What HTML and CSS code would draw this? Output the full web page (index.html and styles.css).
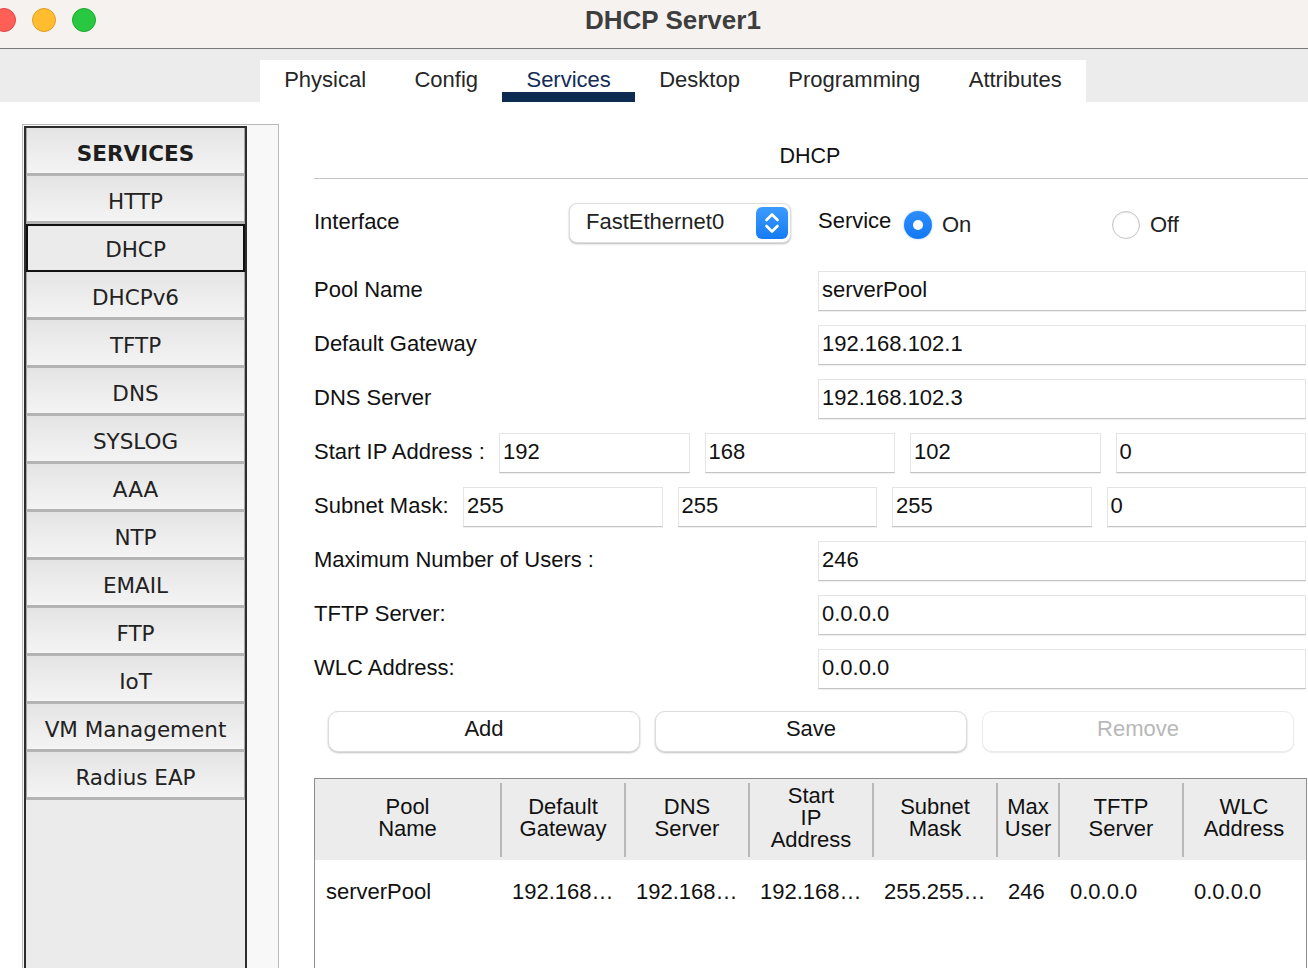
FILE: index.html
```html
<!DOCTYPE html>
<html lang="en">
<head>
<meta charset="utf-8">
<title>DHCP Server1</title>
<link rel="stylesheet" href="styles.css">
</head>
<body>
<div class="window">
  <header class="titlebar">
    <div class="lights">
      <span class="light red"></span>
      <span class="light yellow"></span>
      <span class="light green"></span>
    </div>
    <div class="title">DHCP Server1</div>
  </header>

  <nav class="tabbar">
    <div class="tabs">
      <span class="tab">Physical</span>
      <span class="tab">Config</span>
      <span class="tab active">Services</span>
      <span class="tab">Desktop</span>
      <span class="tab">Programming</span>
      <span class="tab">Attributes</span>
    </div>
  </nav>

  <main class="main">
    <aside class="sidebar">
      <div class="svc-list">
        <div class="svc head">SERVICES</div>
        <div class="svc">HTTP</div>
        <div class="svc selected">DHCP</div>
        <div class="svc">DHCPv6</div>
        <div class="svc">TFTP</div>
        <div class="svc">DNS</div>
        <div class="svc">SYSLOG</div>
        <div class="svc">AAA</div>
        <div class="svc">NTP</div>
        <div class="svc">EMAIL</div>
        <div class="svc">FTP</div>
        <div class="svc">IoT</div>
        <div class="svc">VM Management</div>
        <div class="svc">Radius EAP</div>
      </div>
    </aside>

    <section class="panel">
      <div class="panel-title">DHCP</div>

      <div class="form">
        <div class="row iface-row">
          <span class="lbl lbl-iface">Interface</span>
          <div class="select">
            <span class="select-text">FastEthernet0</span>
            <span class="select-btn">
              <svg width="32" height="32" viewBox="0 0 32 32">
                <path d="M10.5 13 L16 7.5 L21.5 13" fill="none" stroke="#fff" stroke-width="2.6" stroke-linecap="round" stroke-linejoin="round"/>
                <path d="M10.5 19 L16 24.5 L21.5 19" fill="none" stroke="#fff" stroke-width="2.6" stroke-linecap="round" stroke-linejoin="round"/>
              </svg>
            </span>
          </div>
          <span class="svc-lbl">Service</span>
          <span class="radio-group"><span class="radio on"></span><span class="radio-text">On</span></span>
          <span class="radio-group"><span class="radio"></span><span class="radio-text">Off</span></span>
        </div>

        <div class="row">
          <span class="lbl lbl-wide">Pool Name</span>
          <input class="field" value="serverPool">
        </div>
        <div class="row">
          <span class="lbl lbl-wide">Default Gateway</span>
          <input class="field" value="192.168.102.1">
        </div>
        <div class="row">
          <span class="lbl lbl-wide">DNS Server</span>
          <input class="field" value="192.168.102.3">
        </div>
        <div class="row quad-row">
          <span class="lbl lbl-start">Start IP Address :</span>
          <input class="field" value="192">
          <input class="field" value="168">
          <input class="field" value="102">
          <input class="field" value="0">
        </div>
        <div class="row quad-row">
          <span class="lbl lbl-subnet">Subnet Mask:</span>
          <input class="field" value="255">
          <input class="field" value="255">
          <input class="field" value="255">
          <input class="field" value="0">
        </div>
        <div class="row">
          <span class="lbl lbl-wide">Maximum Number of Users :</span>
          <input class="field" value="246">
        </div>
        <div class="row">
          <span class="lbl lbl-wide">TFTP Server:</span>
          <input class="field" value="0.0.0.0">
        </div>
        <div class="row">
          <span class="lbl lbl-wide">WLC Address:</span>
          <input class="field" value="0.0.0.0">
        </div>
      </div>

      <div class="buttons">
        <button class="btn">Add</button>
        <button class="btn">Save</button>
        <button class="btn disabled">Remove</button>
      </div>

      <div class="table-wrap">
        <table class="pools">
          <colgroup>
            <col class="c-pool">
            <col class="c-std">
            <col class="c-std">
            <col class="c-std">
            <col class="c-std">
            <col class="c-max">
            <col class="c-std">
            <col class="c-last">
          </colgroup>
          <thead>
            <tr>
              <th>Pool<br>Name</th>
              <th>Default<br>Gateway</th>
              <th>DNS<br>Server</th>
              <th>Start<br>IP<br>Address</th>
              <th>Subnet<br>Mask</th>
              <th>Max<br>User</th>
              <th>TFTP<br>Server</th>
              <th class="last">WLC<br>Address</th>
            </tr>
          </thead>
          <tbody>
            <tr>
              <td class="first">serverPool</td>
              <td>192.168…</td>
              <td>192.168…</td>
              <td>192.168…</td>
              <td>255.255…</td>
              <td>246</td>
              <td>0.0.0.0</td>
              <td>0.0.0.0</td>
            </tr>
          </tbody>
        </table>
      </div>
    </section>
  </main>
</div>
</body>
</html>
```

FILE: styles.css
```css
html, body {
  margin: 0;
  padding: 0;
}
body {
  width: 1308px;
  height: 968px;
  overflow: hidden;
  background: #ffffff;
  font-family: "Liberation Sans", Arial, Helvetica, sans-serif;
  color: #111;
}
.window {
  width: 1308px;
  height: 968px;
  overflow: hidden;
}

/* title bar */
.titlebar {
  height: 49px;
  box-sizing: border-box;
  padding-bottom: 8px;
  background: #f6f2ef;
  border-bottom: 1px solid #7a7a7a;
  display: flex;
  align-items: center;
}
.lights {
  display: flex;
  gap: 16px;
  margin-left: -8px;
}
.light {
  width: 24px;
  height: 24px;
  border-radius: 50%;
  box-sizing: border-box;
}
.red { background: #ff5f57; border: 1px solid #e2463f; }
.yellow { background: #febc2e; border: 1px solid #dea123; }
.green { background: #28c840; border: 1px solid #1daa2c; }
.title {
  margin-left: 489px;
  font-size: 26px;
  font-weight: bold;
  color: #3e3e3e;
  line-height: 30px;
}

/* tabs */
.tabbar {
  height: 53px;
  background: #ececec;
  display: flex;
  align-items: flex-end;
  padding-left: 260px;
}
.tabs {
  display: flex;
  background: #ffffff;
  height: 42px;
}
.tab {
  padding: 0 24.2px;
  font-size: 22px;
  line-height: 40px;
  color: #262626;
}
.tab.active {
  color: #142d57;
  box-shadow: inset 0 -10px 0 #0d2a50;
}

/* main */
.main {
  display: flex;
  align-items: flex-start;
  padding-top: 22px;
}

/* sidebar */
.sidebar {
  margin-left: 22px;
  width: 257px;
  height: 846px;
  box-sizing: border-box;
  border: 1px solid #b9b9b9;
  border-bottom: none;
  background: #f8f8f8;
  padding: 1px 0 0 1px;
  flex: none;
}
.svc-list {
  width: 223px;
  height: 100%;
  box-sizing: border-box;
  border: 2px solid #2d2d2d;
  border-bottom: none;
  background: #ebebeb;
}
.svc {
  height: 48px;
  box-sizing: border-box;
  border-left: 1px solid #a7a7a7;
  border-right: 1px solid #a7a7a7;
  border-bottom: 3px solid #b3b3b3;
  background: linear-gradient(#e4e4e4, #f4f4f4);
  display: flex;
  align-items: center;
  justify-content: center;
  font-family: "DejaVu Sans", Verdana, sans-serif;
  font-size: 21.5px;
  color: #222;
  padding-top: 5px;
}
.svc.head {
  font-weight: bold;
  color: #1e1e1e;
}
.svc.selected {
  border: 2px solid #111;
  background: #ebebeb;
  padding-top: 2px;
}

/* panel */
.panel {
  margin-left: 35px;
  width: 994px;
  flex: none;
}
.panel-title {
  font-size: 21.5px;
  line-height: 24px;
  text-align: center;
  padding: 20px 2px 10px 0;
  border-bottom: 1px solid #c4c4c4;
  color: #111;
}

.form {
  width: 992px;
  margin-top: 24px;
  display: flex;
  flex-direction: column;
  gap: 14px;
}
.row {
  display: flex;
  align-items: center;
  height: 40px;
}
.iface-row {
  margin-bottom: 14px;
}
.lbl {
  font-size: 22px;
  color: #111;
  flex: none;
  white-space: nowrap;
  padding-bottom: 2px;
}
.lbl-wide { width: 504px; }
.lbl-iface { width: 255px; }
.lbl-start { width: 185px; }
.lbl-subnet { width: 149px; }
.quad-row { gap: 15px; }
.quad-row .lbl { margin-right: -15px; }

.field {
  flex: 1;
  min-width: 0;
  height: 40px;
  box-sizing: border-box;
  border: 1px solid #e4e4e4;
  border-bottom: 1px solid #c4c4c4;
  box-shadow: 0 1px 0 rgba(0,0,0,0.06);
  background: #fff;
  padding: 0 3px 2px;
  font-family: "Liberation Sans", Arial, Helvetica, sans-serif;
  font-size: 22px;
  color: #111;
  outline: none;
  margin: 0;
}

/* select */
.select {
  width: 222px;
  height: 40px;
  box-sizing: border-box;
  border-radius: 8px;
  background: #fff;
  border: 1px solid #dedede;
  box-shadow: 0 1px 2px rgba(0,0,0,0.28);
  display: flex;
  align-items: center;
  justify-content: space-between;
  padding: 0 2px 0 16px;
  flex: none;
}
.select-text {
  font-size: 22px;
  color: #222;
  padding-bottom: 2px;
}
.select-btn {
  width: 32px;
  height: 32px;
  border-radius: 6px;
  background: linear-gradient(#3d9bff, #167cf4);
  display: flex;
}
.svc-lbl {
  margin-left: 27px;
  width: 86px;
  font-size: 22px;
  color: #111;
  flex: none;
  padding-bottom: 4px;
}
.radio-group {
  width: 208px;
  display: flex;
  align-items: center;
  gap: 10px;
  flex: none;
  padding-top: 4px;
}
.radio {
  width: 28px;
  height: 28px;
  box-sizing: border-box;
  border-radius: 50%;
  background: #fff;
  border: 1px solid #c4c4c4;
  box-shadow: inset 0 1px 2px rgba(0,0,0,0.08);
  display: flex;
  align-items: center;
  justify-content: center;
}
.radio.on {
  border: none;
  background: linear-gradient(#2c8dff, #1478f2);
  box-shadow: 0 0 2px rgba(20,120,242,0.5);
}
.radio.on::after {
  content: "";
  width: 10px;
  height: 10px;
  border-radius: 50%;
  background: #fff;
}
.radio-text {
  font-size: 22px;
  color: #222;
}

/* buttons */
.buttons {
  display: flex;
  gap: 15px;
  width: 992px;
  box-sizing: border-box;
  padding: 0 12px 0 14px;
  margin-top: 22px;
}
.btn {
  flex: 1;
  height: 41px;
  border-radius: 10px;
  background: #fff;
  border: 1px solid #dcdcdc;
  box-shadow: 0 1px 2px rgba(0,0,0,0.25);
  font-family: "Liberation Sans", Arial, Helvetica, sans-serif;
  font-size: 22px;
  color: #151515;
  padding: 0 0 6px;
}
.btn.disabled {
  color: #b8b8b8;
  border-color: #ececec;
  box-shadow: 0 1px 1px rgba(0,0,0,0.08);
}

/* table */
.table-wrap {
  margin-top: 26px;
  width: 993px;
  height: 200px;
  box-sizing: border-box;
  border: 1px solid #8d8d8d;
  border-bottom: none;
}
.pools {
  width: 991px;
  border-collapse: collapse;
  table-layout: fixed;
}
.c-pool { width: 187px; }
.c-std { width: 124px; }
.c-max { width: 62px; }
.c-last { width: 122px; }
.pools th {
  height: 78px;
  padding: 0 2px 3px 0;
  background: #ececec;
  font-weight: normal;
  font-size: 22px;
  line-height: 22px;
  color: #111;
  text-align: center;
  vertical-align: middle;
  position: relative;
}
.pools th::after {
  content: "";
  position: absolute;
  right: 0;
  top: 4px;
  bottom: 3px;
  width: 2px;
  background: #b9b9b9;
}
.pools th.last::after {
  display: none;
}
.pools td {
  height: 64px;
  padding: 0 0 0 10px;
  font-size: 22px;
  color: #111;
  white-space: nowrap;
  overflow: hidden;
  vertical-align: middle;
}
.pools td.first {
  padding-left: 11px;
}
```
